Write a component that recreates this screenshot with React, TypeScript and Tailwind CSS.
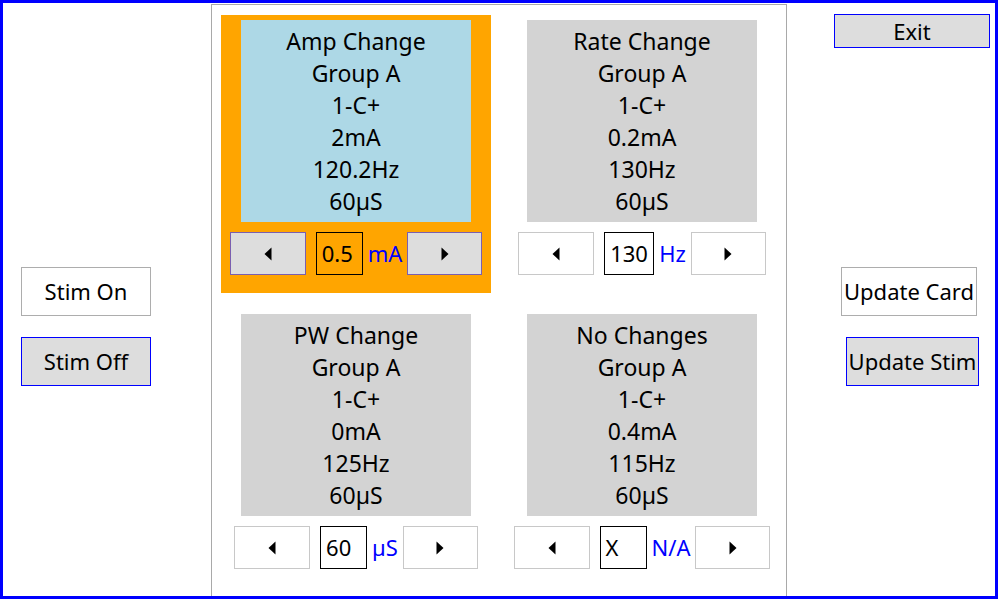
import React from "react";

const font = { fontFamily: '"Noto Sans", "Open Sans", sans-serif' };

function Arrow({ dir }: { dir: "left" | "right" }) {
  return (
    <svg width="8" height="14" viewBox="0 0 8 14">
      {dir === "left" ? <polygon points="7.5,0.5 7.5,13.5 0.5,7" fill="#000" /> : <polygon points="0.5,0.5 0.5,13.5 7.5,7" fill="#000" />}
    </svg>
  );
}

function Card({
  lines,
  active,
  value,
  unit,
  boxW,
}: {
  lines: string[];
  active?: boolean;
  value: string;
  unit: string;
  boxW: string;
}) {
  return (
    <div className={`flex h-[278px] w-[270px] flex-col items-center pt-[5px] ${active ? "bg-[#ffa500]" : ""}`}>
      <div
        className={`flex h-[202px] w-[230px] flex-col items-center py-[5px] text-[23px] leading-[32px] text-black ${
          active ? "bg-[#add8e6]" : "bg-[#d3d3d3]"
        }`}
      >
        {lines.map((l, i) => (
          <div key={i}>{l}</div>
        ))}
      </div>
      <div className="mt-[10px] flex h-[43px] items-center">
        <button
          className={`flex h-[43px] w-[76px] items-center justify-center border ${
            active ? "border-[#7a5fb0] bg-[#dddddd]" : "border-[#c8c8c8] bg-white"
          }`}
        >
          <Arrow dir="left" />
        </button>
        <div
          className={`ml-[10px] flex h-[43px] ${boxW} items-center border border-black pl-[5px] text-[22px] text-black`}
        >
          {value}
        </div>
        <div className="ml-[5px] text-[22px] text-[#0000ff]">{unit}</div>
        <button
          className={`ml-[5px] flex h-[43px] w-[75px] items-center justify-center border ${
            active ? "border-[#7a5fb0] bg-[#dddddd]" : "border-[#c8c8c8] bg-white"
          }`}
        >
          <Arrow dir="right" />
        </button>
      </div>
    </div>
  );
}

export default function App() {
  return (
    <div className="flex h-[599px] w-[998px] border-[3px] border-[#0000ff] bg-white" style={font}>
      <div className="flex w-[208px] flex-col pl-[18px] pt-[264px]">
        <button className="h-[49px] w-[130px] border border-[#adadad] bg-white text-[22px] text-black">Stim On</button>
        <button className="mt-[21px] h-[49px] w-[130px] border border-[#0000ff] bg-[#dddddd] text-[22px] text-black">
          Stim Off
        </button>
      </div>
      <div className="mt-[1px] flex w-[576px] flex-col border-x border-t border-[#a9a9a9] px-[9px] pt-[10px]">
        <div className="flex gap-[16px]">
          <Card
            active
            lines={["Amp Change", "Group A", "1-C+", "2mA", "120.2Hz", "60µS"]}
            value="0.5"
            unit="mA"
            boxW="w-[47px]"
          />
          <Card
            lines={["Rate Change", "Group A", "1-C+", "0.2mA", "130Hz", "60µS"]}
            value="130"
            unit="Hz"
            boxW="w-[50px]"
          />
        </div>
        <div className="mt-[16px] flex gap-[16px]">
          <Card
            lines={["PW Change", "Group A", "1-C+", "0mA", "125Hz", "60µS"]}
            value="60"
            unit="µS"
            boxW="w-[47px]"
          />
          <Card
            lines={["No Changes", "Group A", "1-C+", "0.4mA", "115Hz", "60µS"]}
            value="X"
            unit="N/A"
            boxW="w-[47px]"
          />
        </div>
      </div>
      <div className="flex flex-1 flex-col">
        <button className="ml-[47px] mt-[11px] h-[34px] w-[156px] border border-[#0000ff] bg-[#dddddd] text-[22px] leading-none text-black">
          Exit
        </button>
        <button className="ml-[54px] mt-[219px] h-[49px] w-[136px] whitespace-nowrap border border-[#adadad] bg-white text-[22px] text-black">
          Update Card
        </button>
        <button className="ml-[59px] mt-[21px] h-[49px] w-[133px] whitespace-nowrap border border-[#0000ff] bg-[#dddddd] text-[22px] text-black">
          Update Stim
        </button>
      </div>
    </div>
  );
}
